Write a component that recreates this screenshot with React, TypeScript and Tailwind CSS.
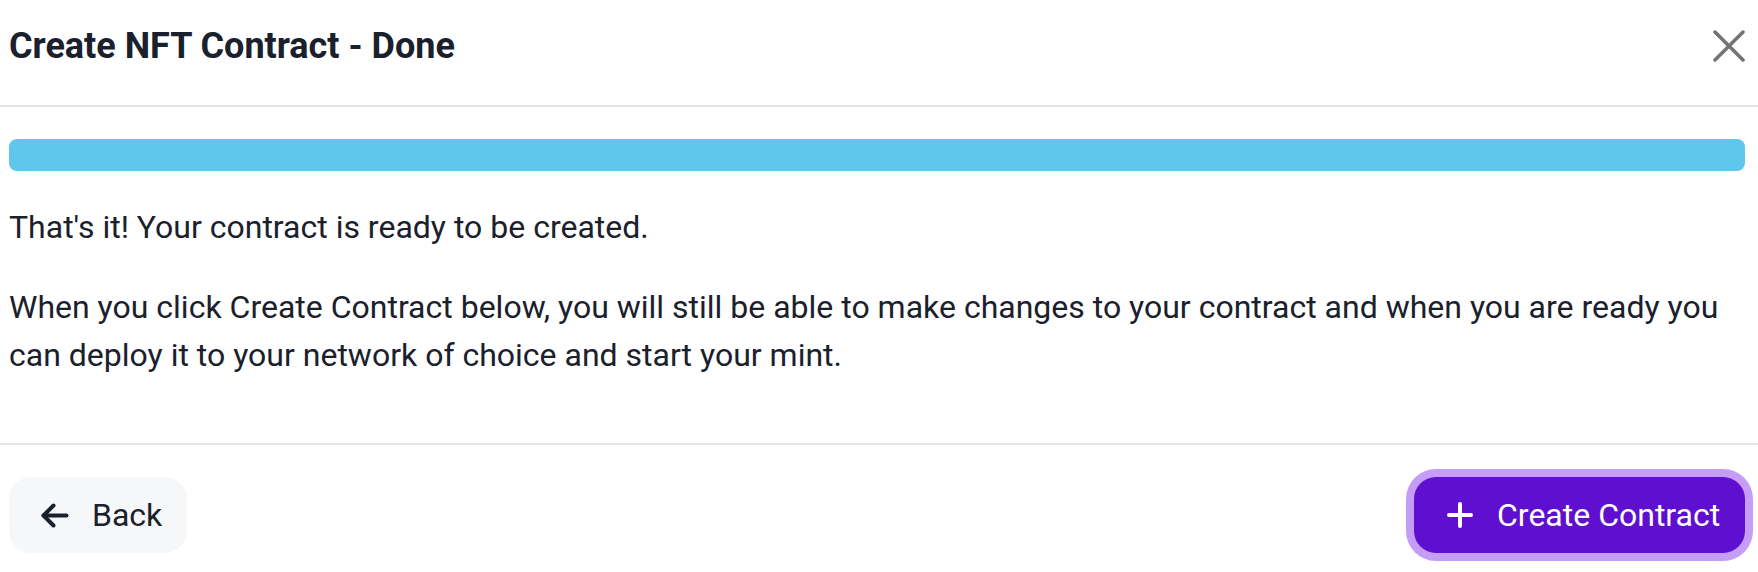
import React from "react";

const ArrowLeft = () => (
  <svg width="28" height="25" viewBox="0 0 28 25" fill="none" stroke="currentColor" strokeWidth={4} strokeLinecap="round" strokeLinejoin="round">
    <path d="M12.5 2.5 2.5 12.5l10 10" />
    <path d="M2.5 12.5h23" />
  </svg>
);

const Plus = () => (
  <svg width="26" height="26" viewBox="0 0 26 26" fill="none" stroke="currentColor" strokeWidth={4} strokeLinecap="round">
    <path d="M13 2v22" />
    <path d="M2 13h22" />
  </svg>
);

const Close = () => (
  <svg width="32" height="32" viewBox="0 0 32 32" fill="none" stroke="currentColor" strokeWidth={3.5} strokeLinecap="round">
    <path d="M2 2l28 28" />
    <path d="M30 2 2 30" />
  </svg>
);

export default function App() {
  return (
    <div className="w-[1758px] h-[572px] overflow-hidden bg-white text-[#1a202c] font-['Roboto',_'Liberation_Sans',_sans-serif]">
      {/* Header */}
      <div className="h-[107px] border-b-2 border-[#e2e3e7] pl-[9px] pr-[13px] pt-[24px] flex items-start justify-between">
        <h1 className="text-[36px] leading-[44px] font-bold">Create NFT Contract - Done</h1>
        <button className="mt-[6px] text-[#737373]">
          <Close />
        </button>
      </div>

      {/* Body */}
      <div className="pl-[9px] pr-[13px] pt-[32px] pb-[64px] border-b-2 border-[#e2e3e7]">
        <div className="h-[32px] rounded-[8px] bg-[#5ec7ec]" />
        <p className="mt-[32px] text-[32px] leading-[48px]">That's it! Your contract is ready to be created.</p>
        <p className="mt-[32px] text-[32px] leading-[48px]">
          When you click Create Contract below, you will still be able to make changes to your contract and when you are ready you can deploy it to your network of choice and start your mint.
        </p>
      </div>

      {/* Footer */}
      <div className="pl-[9px] pr-[13px] pt-[32px] flex items-center justify-between">
        <button className="h-[76px] w-[178px] pl-[32px] flex items-center gap-[23px] rounded-[22px] bg-[#f6f7f9] text-[32px] text-[#1a202c]">
          <ArrowLeft />
          <span>Back</span>
        </button>
        <button className="h-[76px] w-[331px] pl-[33px] flex items-center gap-[24px] rounded-[22px] bg-[#5f0fd0] text-white text-[32px] ring-8 ring-[#c59cf6]">
          <Plus />
          <span>Create Contract</span>
        </button>
      </div>
    </div>
  );
}
